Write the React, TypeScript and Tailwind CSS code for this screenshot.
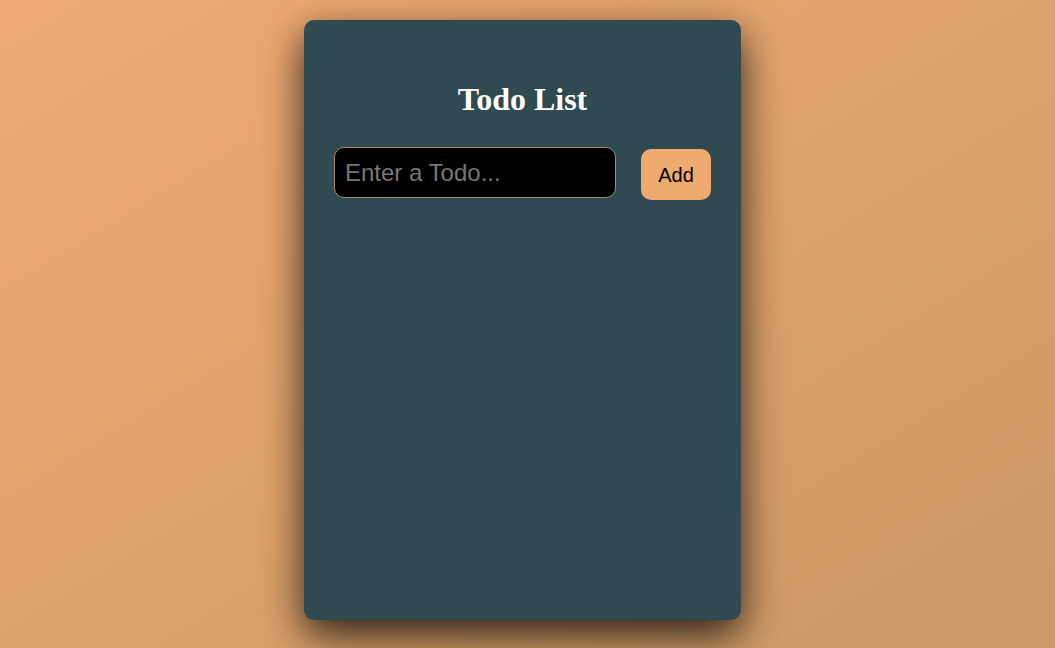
import { useState } from "react";

export default function App() {
  const [todo, setTodo] = useState("");

  return (
    <div className="min-h-screen w-full bg-linear-to-br from-[#f1aa73] to-[#ca9966] flex justify-center pt-[20px] pr-[10px]">
      <div className="w-[437px] h-[600px] rounded-[10px] bg-[#2f4a51] shadow-[0_15px_40px_rgba(0,0,0,0.8)] px-[30px] pt-[30px]">
        <h1 className="mt-[31px] text-center text-[32px] leading-[36px] font-bold text-white font-['Liberation_Serif',serif]">
          Todo List
        </h1>
        <form
          className="mt-[30px] flex items-start justify-between"
          onSubmit={(e) => e.preventDefault()}
        >
          <input
            value={todo}
            onChange={(e) => setTodo(e.target.value)}
            placeholder="Enter a Todo..."
            className="w-[282px] h-[51px] rounded-[10px] border border-[#a8865e] bg-black px-[10px] text-[24px] text-white placeholder:text-[#777777] outline-none font-['Liberation_Sans',sans-serif]"
          />
          <button
            type="submit"
            className="mt-[2px] w-[70px] h-[51px] rounded-[10px] bg-[#efaa6f] text-[20px] text-black font-['Liberation_Sans',sans-serif]"
          >
            Add
          </button>
        </form>
      </div>
    </div>
  );
}
